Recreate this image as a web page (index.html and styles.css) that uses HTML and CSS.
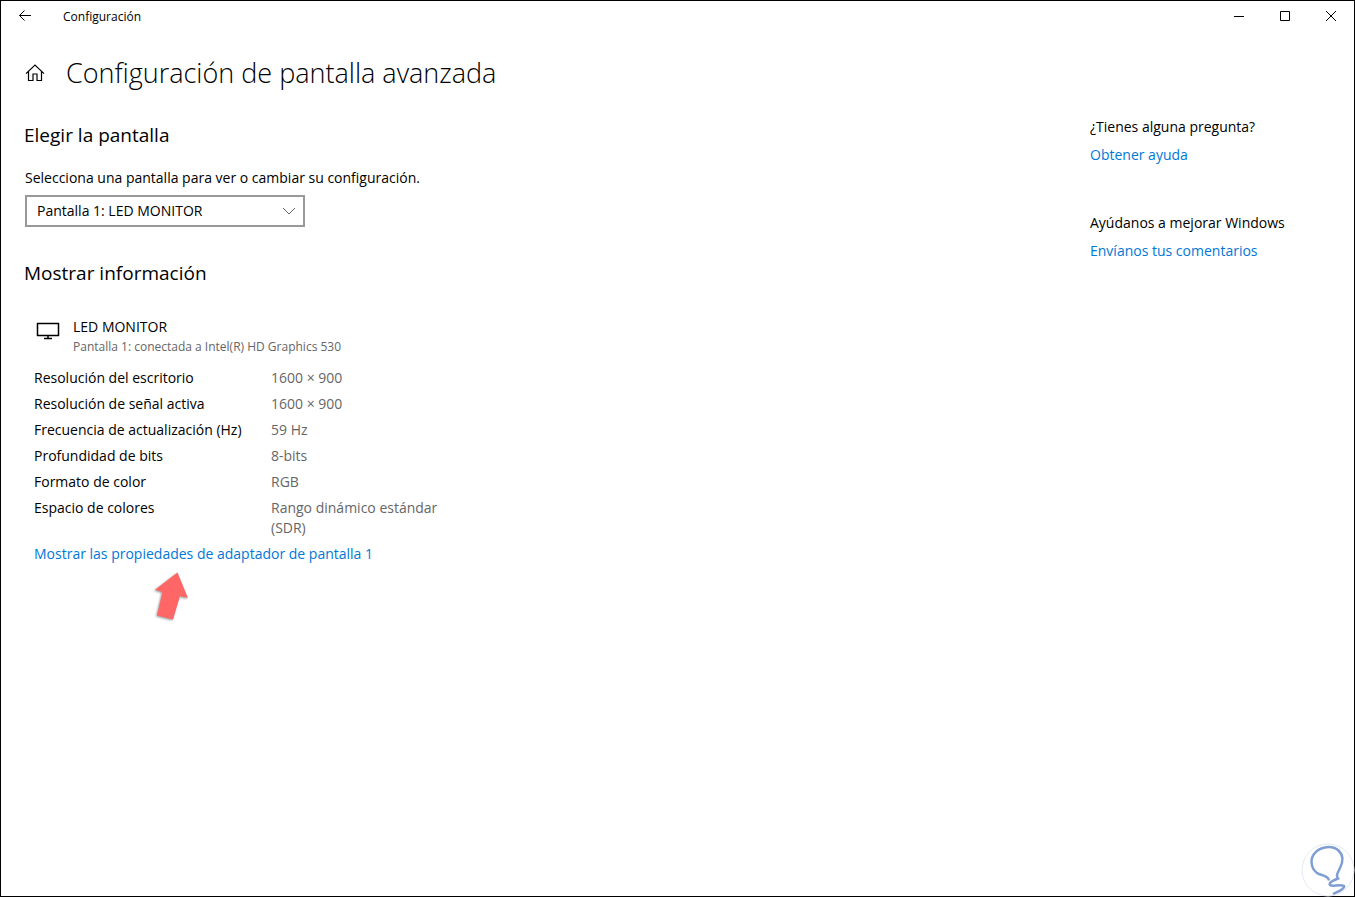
FILE: index.html
```html
<!DOCTYPE html>
<html lang="es">
<head>
<meta charset="utf-8">
<meta name="viewport" content="width=device-width, initial-scale=1">
<title>Configuración</title>
<link rel="stylesheet" href="styles.css">
</head>
<body>
<div class="window">
  <header class="titlebar">
    <button class="back" type="button" aria-label="Atrás">
      <svg width="14" height="12" viewBox="0 0 14 12"><path d="M13 5.500H1.500M6.500 .5 1.500 5.500l5 5"/></svg>
    </button>
    <span class="app-name">Configuración</span>
    <div class="controls">
      <button type="button" aria-label="Minimizar"><svg width="10" height="10" viewBox="0 0 10 10"><path d="M0 5.5h10"/></svg></button>
      <button type="button" aria-label="Maximizar"><svg width="10" height="10" viewBox="0 0 10 10"><path d="M.5 .5h9v9h-9z"/></svg></button>
      <button type="button" aria-label="Cerrar"><svg width="10" height="10" viewBox="0 0 10 10"><path d="M0 0l10 10M10 0 0 10"/></svg></button>
    </div>
  </header>

  <div class="heading">
    <button class="home" type="button" aria-label="Inicio">
      <svg width="20" height="18" viewBox="0 0 20 18"><path d="M1 9.600 10 1l9 8.600M3.500 7.500v9h4.500v-6.500h4v6.500h4.500V7.500"/></svg>
    </button>
    <h1>Configuración de pantalla avanzada</h1>
  </div>

  <div class="content">
    <main>
      <section class="choose">
        <h2>Elegir la pantalla</h2>
        <label for="display">Selecciona una pantalla para ver o cambiar su configuración.</label>
        <div class="select">
          <select id="display"><option>Pantalla 1: LED MONITOR</option></select>
          <svg class="chevron" width="14" height="8" viewBox="0 0 14 8"><path d="M1 1l6 6 6-6"/></svg>
        </div>
      </section>
      <section class="info">
        <h2>Mostrar información</h2>
        <div class="monitor">
          <svg width="24" height="18" viewBox="0 0 24 18"><path d="M1 1.500h22M1 13.500h22M1.500 1v13M22.500 1v13" /><path d="M12 14v3M8 16.500h8"/></svg>
          <div>
            <div>LED MONITOR</div>
            <div class="connected">Pantalla 1: conectada a Intel(R) HD Graphics 530</div>
          </div>
        </div>
        <table>
          <tbody>
            <tr><th scope="row">Resolución del escritorio</th><td>1600 × 900</td></tr>
            <tr><th scope="row">Resolución de señal activa</th><td>1600 × 900</td></tr>
            <tr><th scope="row">Frecuencia de actualización (Hz)</th><td>59 Hz</td></tr>
            <tr><th scope="row">Profundidad de bits</th><td>8-bits</td></tr>
            <tr><th scope="row">Formato de color</th><td>RGB</td></tr>
            <tr><th scope="row">Espacio de colores</th><td>Rango dinámico estándar (SDR)</td></tr>
          </tbody>
        </table>
        <div class="adapter">
          <a href="#">Mostrar las propiedades de adaptador de pantalla 1</a>
          <svg class="pointer" width="38" height="52" viewBox="0 0 38 52"><path d="M25.500 2.500 36 28l-8-2-7 23.500-16-4L10.500 22 3 19.800z"/></svg>
        </div>
      </section>
    </main>
    <aside>
      <section>
        <p>¿Tienes alguna pregunta?</p>
        <a href="#">Obtener ayuda</a>
      </section>
      <section>
        <p>Ayúdanos a mejorar Windows</p>
        <a href="#">Envíanos tus comentarios</a>
      </section>
    </aside>
  </div>
  <svg class="bulb" width="54" height="54" viewBox="0 0 54 54">
    <circle cx="27" cy="27" r="26"/>
    <path d="M28 37.500C27 33 23 33 18 31C11 28 8 18 13 11C19 3 32 2 38 8C43 13 42 19 39 25C36 31 35 33 37 35.500C33 37 27 40 29 42C31 44 39 41 43 43C44 46 36 49 32 51"/>
  </svg>
</div>
</body>
</html>
```
FILE: styles.css
```css
* {
  box-sizing: border-box;
}

body {
  margin: 0;
  background: #fff;
  color: #000;
  font: 14px/20px "Open Sans", "Noto Sans", sans-serif;
}

h1, h2, p {
  margin: 0;
  font-weight: 400;
}

svg {
  display: block;
  fill: none;
  stroke: #000;
}

button {
  display: flex;
  align-items: center;
  justify-content: center;
  padding: 0;
  border: 0;
  background: none;
}

a {
  color: #0078d7;
  text-decoration: none;
}

.window {
  position: relative;
  min-height: 100vh;
  border: 1px solid #000;
}

.titlebar {
  display: flex;
  align-items: center;
  height: 30px;
}

.back {
  width: 48px;
  height: 30px;
}

.home svg {
  stroke-width: 1.2;
}

.app-name {
  margin-left: 14px;
  padding-top: 2px;
  font-size: 12px;
}

.controls {
  display: flex;
  margin-left: auto;
}

.controls button {
  width: 46px;
  height: 30px;
}

.heading {
  display: flex;
  align-items: center;
  gap: 21px;
  padding: 21px 24px 0;
}

h1 {
  font-size: 27px;
  font-weight: 300;
  line-height: 42px;
}

.content {
  display: flex;
  justify-content: space-between;
  padding: 23px 0 40px 23px;
}

main {
  padding-top: 4px;
}

aside {
  display: grid;
  flex: 0 0 264px;
  align-content: start;
  gap: 48px;
}

aside section {
  display: grid;
  gap: 8px;
}

h2 {
  font-size: 19px;
  line-height: 28px;
}

.choose label {
  display: block;
  margin: 19px 0 7px 1px;
}

.select {
  position: relative;
  width: 280px;
  margin-left: 1px;
}

select {
  width: 100%;
  height: 32px;
  padding: 0 32px 0 10px;
  border: 2px solid #999;
  border-radius: 0;
  appearance: none;
  background: #fff;
  color: #000;
  font: inherit;
}

.chevron {
  position: absolute;
  top: 12px;
  right: 9px;
  stroke: #666;
  pointer-events: none;
}

.info {
  margin-top: 32px;
}

.monitor {
  display: flex;
  gap: 13px;
  margin: 30px 0 8px 12px;
}

.monitor svg {
  margin-top: 5px;
  stroke-width: 1.5;
}

.connected {
  color: #666;
  font-size: 12px;
}

table {
  margin-left: 10px;
  border-collapse: collapse;
}

th, td {
  padding: 3px 0;
  text-align: left;
  vertical-align: top;
  font-weight: 400;
}

th {
  width: 237px;
}

td {
  width: 180px;
  color: #666;
}

.adapter {
  position: relative;
  margin: 3px 0 0 10px;
}

.pointer {
  position: absolute;
  top: 26px;
  left: 118px;
  fill: #f66;
  stroke: none;
  filter: drop-shadow(-1px 1px 1px #0006);
}

.bulb {
  position: absolute;
  right: -1px;
  bottom: -1px;
  stroke: #7f9ed3;
  stroke-width: 2.500;
}

.bulb circle {
  fill: #fffc;
  stroke: #e6e9f5;
  stroke-width: 1;
}
```
